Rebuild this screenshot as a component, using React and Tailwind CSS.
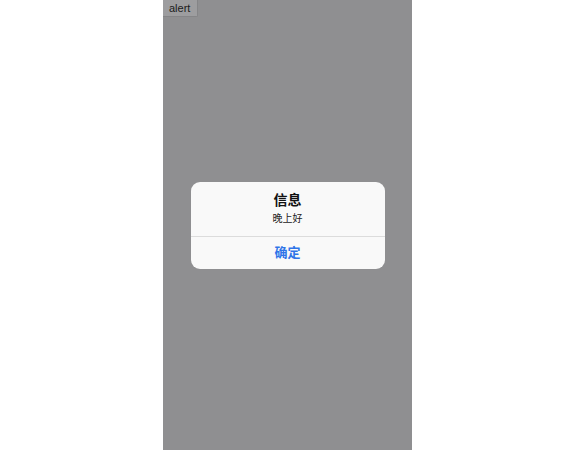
export default function App() {
  return (
    <div className="w-full h-[450px] bg-white font-['Liberation_Sans','Noto_Sans_CJK_SC',sans-serif]">
      <div className="relative ml-[163px] w-[249px] h-[450px] bg-[#8f8f91]">
        <button className="block h-[17px] pl-[6px] pr-[7px] bg-[#9d9d9f] border border-[#858587] border-t-0 border-l-0 rounded-br-[2px] text-[11px] leading-[15px] text-[#1c1c1c]">
          alert
        </button>

        {/* dialog overlay */}
        <div className="absolute inset-0 flex items-center justify-center">
          <div className="w-[194px] h-[87px] bg-[#f9f9f9] rounded-[9px] overflow-hidden flex flex-col">
            <div className="flex-1 flex flex-col items-center pt-[8px]">
              <p className="text-[14px] leading-[20px] font-bold text-[#111]">信息</p>
              <p className="text-[10px] leading-[14px] mt-[2px] text-[#222]">晚上好</p>
            </div>
            <div className="h-px bg-[#dcdcdc]" />
            <div className="h-[32px] flex items-center justify-center">
              <span className="text-[13px] font-bold text-[#2f74e8]">确定</span>
            </div>
          </div>
        </div>
      </div>
    </div>
  )
}
